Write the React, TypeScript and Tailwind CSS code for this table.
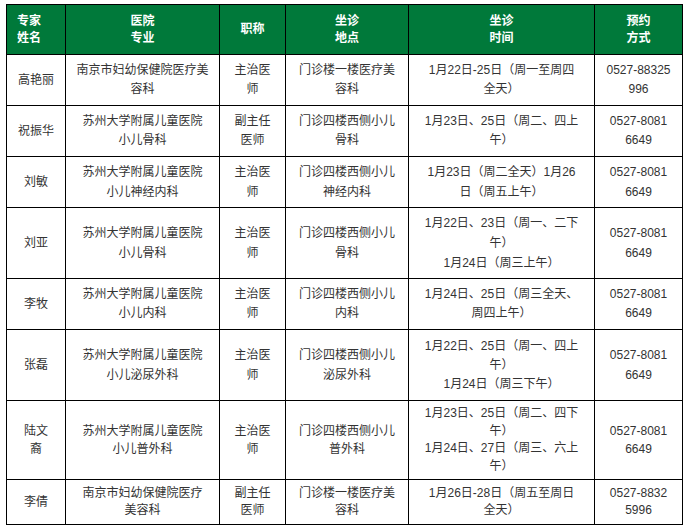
import React from "react";

type Row = {
  lead: string;
  timeLead?: string;
  name: string[];
  hosp: string[];
  title: string[];
  loc: string[];
  time: string[];
  phone: string[];
};

const headers = [
  { lines: ["专家", "姓名"], left: true },
  { lines: ["医院", "专业"] },
  { lines: ["职称"] },
  { lines: ["坐诊", "地点"] },
  { lines: ["坐诊", "时间"] },
  { lines: ["预约", "方式"] },
];

const rows: Row[] = [
  {
    lead: "leading-[19px]",
    name: ["高艳丽"],
    hosp: ["南京市妇幼保健院医疗美", "容科"],
    title: ["主治医", "师"],
    loc: ["门诊楼一楼医疗美", "容科"],
    time: ["1月22日-25日（周一至周四", "全天）"],
    phone: ["0527-88325", "996"],
  },
  {
    lead: "leading-[19px]",
    name: ["祝振华"],
    hosp: ["苏州大学附属儿童医院", "小儿骨科"],
    title: ["副主任", "医师"],
    loc: ["门诊四楼西侧小儿", "骨科"],
    time: ["1月23日、25日（周二、四上", "午）"],
    phone: ["0527-8081", "6649"],
  },
  {
    lead: "leading-[20px]",
    name: ["刘敏"],
    hosp: ["苏州大学附属儿童医院", "小儿神经内科"],
    title: ["主治医", "师"],
    loc: ["门诊四楼西侧小儿", "神经内科"],
    time: ["1月23日（周二全天）1月26", "日（周五上午）"],
    phone: ["0527-8081", "6649"],
  },
  {
    lead: "leading-[20px]",
    name: ["刘亚"],
    hosp: ["苏州大学附属儿童医院", "小儿骨科"],
    title: ["主治医", "师"],
    loc: ["门诊四楼西侧小儿", "骨科"],
    time: ["1月22日、23日（周一、二下", "午）", "1月24日（周三上午）"],
    phone: ["0527-8081", "6649"],
  },
  {
    lead: "leading-[19px]",
    name: ["李牧"],
    hosp: ["苏州大学附属儿童医院", "小儿内科"],
    title: ["主治医", "师"],
    loc: ["门诊四楼西侧小儿", "内科"],
    time: ["1月24日、25日（周三全天、", "周四上午）"],
    phone: ["0527-8081", "6649"],
  },
  {
    lead: "leading-[20px]",
    timeLead: "leading-[19px]",
    name: ["张磊"],
    hosp: ["苏州大学附属儿童医院", "小儿泌尿外科"],
    title: ["主治医", "师"],
    loc: ["门诊四楼西侧小儿", "泌尿外科"],
    time: ["1月22日、25日（周一、四上", "午）", "1月24日（周三下午）"],
    phone: ["0527-8081", "6649"],
  },
  {
    lead: "leading-[18px]",
    timeLead: "leading-[17.5px]",
    name: ["陆文", "裔"],
    hosp: ["苏州大学附属儿童医院", "小儿普外科"],
    title: ["主治医", "师"],
    loc: ["门诊四楼西侧小儿", "普外科"],
    time: ["1月23日、25日（周二、四下", "午）", "1月24日、27日（周三、六上", "午）"],
    phone: ["0527-8081", "6649"],
  },
  {
    lead: "leading-[17px]",
    name: ["李倩"],
    hosp: ["南京市妇幼保健院医疗", "美容科"],
    title: ["副主任", "医师"],
    loc: ["门诊楼一楼医疗美", "容科"],
    time: ["1月26日-28日（周五至周日", "全天）"],
    phone: ["0527-8832", "5996"],
  },
];

function Lines({ lines }: { lines: string[] }) {
  return (
    <div>
      {lines.map((l, i) => (
        <div key={i} className="whitespace-nowrap">
          {l}
        </div>
      ))}
    </div>
  );
}

function Cell({ lines, lead }: { lines: string[]; lead: string }) {
  return (
    <div
      className={`flex items-center justify-center border-r border-b border-black text-center ${lead}`}
    >
      <Lines lines={lines} />
    </div>
  );
}

export default function App() {
  return (
    <div
      className="h-[529px] w-[690px] bg-white pt-[4px] pl-[6px] text-[12px] text-[#333]"
      style={{ fontFamily: '"Liberation Sans", "Noto Sans CJK SC", sans-serif' }}
    >
      <div className="grid w-[677px] grid-cols-[59px_154px_66px_123px_186px_88px] grid-rows-[50px_51px_51px_51px_71px_51px_71px_79px_45px] border-t border-l border-black">
        {headers.map((h, i) => (
          <div
            key={i}
            className={`flex items-center border-r border-b border-black bg-[#00793a] font-bold leading-[17px] text-white ${
              h.left ? "justify-start pl-[10px]" : "justify-center text-center"
            }`}
          >
            <Lines lines={h.lines} />
          </div>
        ))}
        {rows.map((r, i) => (
          <React.Fragment key={i}>
            <Cell lines={r.name} lead={r.lead} />
            <Cell lines={r.hosp} lead={r.lead} />
            <Cell lines={r.title} lead={r.lead} />
            <Cell lines={r.loc} lead={r.lead} />
            <Cell lines={r.time} lead={r.timeLead ?? r.lead} />
            <Cell lines={r.phone} lead={r.lead} />
          </React.Fragment>
        ))}
      </div>
    </div>
  );
}
